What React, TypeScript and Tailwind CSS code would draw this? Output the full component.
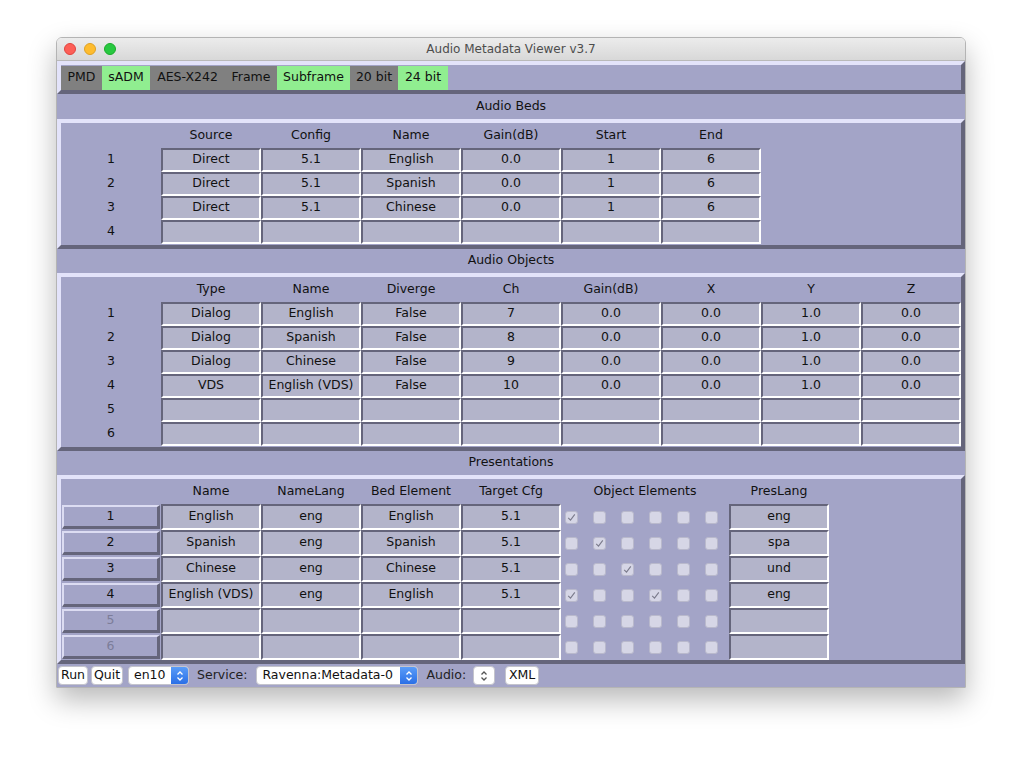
import React from 'react';

// colours picked from the reference
const PANEL =
  'border-t-4 border-l-4 border-b-4 border-r-4 border-t-[#e3e3fa] border-l-[#e3e3fa] border-b-[#65657b] border-r-[#65657b]';
const CELL =
  'w-[100px] h-full pb-[2px] border-2 border-t-[#65657b] border-l-[#65657b] border-b-white border-r-white bg-[#b3b4ca] flex items-center justify-center text-[#111]';

const chips = [
  { label: 'PMD', w: 'w-[41px]', on: false },
  { label: 'sADM', w: 'w-[48px]', on: true },
  { label: 'AES-X242', w: 'w-[75px]', on: false },
  { label: 'Frame', w: 'w-[52px]', on: false },
  { label: 'Subframe', w: 'w-[73px]', on: true },
  { label: '20 bit', w: 'w-[48px]', on: false },
  { label: '24 bit', w: 'w-[50px]', on: true },
];

const BEDS = [
  ['Direct', '5.1', 'English', '0.0', '1', '6'],
  ['Direct', '5.1', 'Spanish', '0.0', '1', '6'],
  ['Direct', '5.1', 'Chinese', '0.0', '1', '6'],
  ['', '', '', '', '', ''],
];

const OBJECTS = [
  ['Dialog', 'English', 'False', '7', '0.0', '0.0', '1.0', '0.0'],
  ['Dialog', 'Spanish', 'False', '8', '0.0', '0.0', '1.0', '0.0'],
  ['Dialog', 'Chinese', 'False', '9', '0.0', '0.0', '1.0', '0.0'],
  ['VDS', 'English (VDS)', 'False', '10', '0.0', '0.0', '1.0', '0.0'],
  ['', '', '', '', '', '', '', ''],
  ['', '', '', '', '', '', '', ''],
];

type Pres = { cells: string[]; checks: number[]; lang: string };

const PRESENTATIONS: Pres[] = [
  { cells: ['English', 'eng', 'English', '5.1'], checks: [1, 0, 0, 0, 0, 0], lang: 'eng' },
  { cells: ['Spanish', 'eng', 'Spanish', '5.1'], checks: [0, 1, 0, 0, 0, 0], lang: 'spa' },
  { cells: ['Chinese', 'eng', 'Chinese', '5.1'], checks: [0, 0, 1, 0, 0, 0], lang: 'und' },
  { cells: ['English (VDS)', 'eng', 'English', '5.1'], checks: [1, 0, 0, 1, 0, 0], lang: 'eng' },
  { cells: ['', '', '', ''], checks: [0, 0, 0, 0, 0, 0], lang: '' },
  { cells: ['', '', '', ''], checks: [0, 0, 0, 0, 0, 0], lang: '' },
];

const Band = ({ title, tall }: { title: string; tall?: boolean }) => (
  <div className={`${tall ? 'h-[25px]' : 'h-[24px] pb-[2px]'} flex items-center justify-center text-[#111]`}>{title}</div>
);

const HeaderRow = ({ labels }: { labels: string[] }) => (
  <div className="h-[25px] flex items-center">
    <div className="w-[100px]" />
    {labels.map((l) => (
      <div key={l} className="w-[100px] text-center text-[#111]">
        {l}
      </div>
    ))}
  </div>
);

const DataRows = ({ rows }: { rows: string[][] }) => (
  <div className="flex flex-col">
    {rows.map((r, i) => (
      <div key={i} className="h-[24px] flex">
        <div className="w-[100px] pb-[2px] flex items-center justify-center text-[#111]">{i + 1}</div>
        {r.map((c, j) => (
          <div key={j} className={CELL}>
            {c}
          </div>
        ))}
      </div>
    ))}
  </div>
);

const CheckBox = ({ checked }: { checked: boolean }) => (
  <div className="w-[13px] h-[13px] rounded-[3px] bg-[#d6d6e6] border border-[#b9b9cc] flex items-center justify-center">
    {checked && (
      <svg width="9" height="9" viewBox="0 0 9 9">
        <path d="M1.2 4.8 L3.5 7.2 L7.8 1.4" fill="none" stroke="#7b7b8c" strokeWidth="1.1" />
      </svg>
    )}
  </div>
);

const Chevrons = ({ color }: { color: string }) => (
  <svg width="8" height="12" viewBox="0 0 8 12">
    <path d="M1.5 4.5 L4 2 L6.5 4.5" fill="none" stroke={color} strokeWidth="1.3" />
    <path d="M1.5 7.5 L4 10 L6.5 7.5" fill="none" stroke={color} strokeWidth="1.3" />
  </svg>
);

const Select = ({ value, w }: { value: string; w: string }) => (
  <div className={`${w} h-[19px] rounded-[4px] bg-white border border-[#c4c4cc] flex items-stretch overflow-hidden`}>
    <div className="flex-1 flex items-center pl-[5px] text-[#111] whitespace-nowrap">{value}</div>
    <div className="w-[17px] bg-linear-to-b from-[#5a9cf8] to-[#2a6fe6] flex items-center justify-center">
      <Chevrons color="#fff" />
    </div>
  </div>
);

const Button = ({ label, w }: { label: string; w: string }) => (
  <div className={`${w} h-[19px] rounded-[4px] bg-white border border-[#c4c4cc] flex items-center justify-center text-[#111]`}>
    {label}
  </div>
);

const App: React.FC = () => {
  return (
    <div className="min-h-screen bg-white flex justify-center pt-[37px] font-['DejaVu_Sans',sans-serif] text-[12.5px]">
      <div className="w-[910px] h-[651px] flex flex-col rounded-t-[6px] border border-[#b4b4b4] overflow-hidden shadow-[0_12px_28px_rgba(0,0,0,0.28)]">
        {/* title bar */}
        <div className="h-[23px] shrink-0 relative flex items-center justify-center bg-linear-to-b from-[#ececec] to-[#d8d8d8] border-b border-[#b9b9b9]">
          <div className="absolute left-[7px] top-[5px] flex gap-[8px]">
            <div className="w-[12px] h-[12px] rounded-full bg-[#fd5f57] border border-[#e0443e]" />
            <div className="w-[12px] h-[12px] rounded-full bg-[#febc2e] border border-[#dea123]" />
            <div className="w-[12px] h-[12px] rounded-full bg-[#28c840] border border-[#1aab29]" />
          </div>
          <span className="text-[12px] text-[#4d4d4d]">Audio Metadata Viewer v3.7</span>
        </div>

        <div className="flex-1 flex flex-col bg-[#a3a4c7]">
          {/* format strip */}
          <div className={`${PANEL} h-[33px] flex pt-[1px]`}>
            {chips.map((c) => (
              <div
                key={c.label}
                className={`${c.w} h-full pb-[1px] flex items-center justify-center text-[#111] ${c.on ? 'bg-[#90ee90]' : 'bg-[#808080]'}`}
              >
                {c.label}
              </div>
            ))}
          </div>

          <Band title="Audio Beds" tall />
          <div className={`${PANEL} h-[130px] flex flex-col`}>
            <HeaderRow labels={['Source', 'Config', 'Name', 'Gain(dB)', 'Start', 'End']} />
            <DataRows rows={BEDS} />
          </div>

          <Band title="Audio Objects" />
          <div className={`${PANEL} h-[178px] flex flex-col`}>
            <HeaderRow labels={['Type', 'Name', 'Diverge', 'Ch', 'Gain(dB)', 'X', 'Y', 'Z']} />
            <DataRows rows={OBJECTS} />
          </div>

          <Band title="Presentations" />
          <div className={`${PANEL} h-[189px] flex flex-col`}>
            <div className="h-[25px] flex items-center text-[#111]">
              <div className="w-[100px]" />
              {['Name', 'NameLang', 'Bed Element', 'Target Cfg'].map((l) => (
                <div key={l} className="w-[100px] text-center">
                  {l}
                </div>
              ))}
              <div className="w-[168px] text-center">Object Elements</div>
              <div className="w-[100px] text-center">PresLang</div>
            </div>
            {PRESENTATIONS.map((p, i) => (
              <div key={i} className="h-[26px] flex">
                <div className="w-[100px] p-[1px]">
                  <div
                    className={`h-full pb-[1px] border-t-2 border-l-2 border-b-[3px] border-r-[3px] border-t-[#dcdcf2] border-l-[#dcdcf2] border-b-[#65657b] border-r-[#65657b] flex items-center justify-center ${
                      i < 4 ? 'text-[#111]' : 'text-[#7c7d99]'
                    }`}
                  >
                    {i + 1}
                  </div>
                </div>
                {p.cells.map((c, j) => (
                  <div key={j} className={CELL}>
                    {c}
                  </div>
                ))}
                <div className="w-[168px] flex items-center">
                  {p.checks.map((v, k) => (
                    <div key={k} className="w-[28px] pl-[4px] flex items-center">
                      <CheckBox checked={v === 1} />
                    </div>
                  ))}
                </div>
                <div className={CELL}>{p.lang}</div>
              </div>
            ))}
          </div>

          {/* bottom controls */}
          <div className="flex-1 flex items-center pl-[1px] text-[#222]">
            <Button label="Run" w="w-[30px]" />
            <div className="ml-[3px]">
              <Button label="Quit" w="w-[32px]" />
            </div>
            <div className="ml-[5px]">
              <Select value="en10" w="w-[61px]" />
            </div>
            <span className="ml-[8px]">Service:</span>
            <div className="ml-[9px]">
              <Select value="Ravenna:Metadata-0" w="w-[162px]" />
            </div>
            <span className="ml-[8px]">Audio:</span>
            <div className="ml-[7px] w-[22px] h-[19px] rounded-[4px] bg-white border border-[#c4c4cc] flex items-center justify-center">
              <Chevrons color="#555" />
            </div>
            <div className="ml-[10px]">
              <Button label="XML" w="w-[34px]" />
            </div>
          </div>
        </div>
      </div>
    </div>
  );
};

export default App;
